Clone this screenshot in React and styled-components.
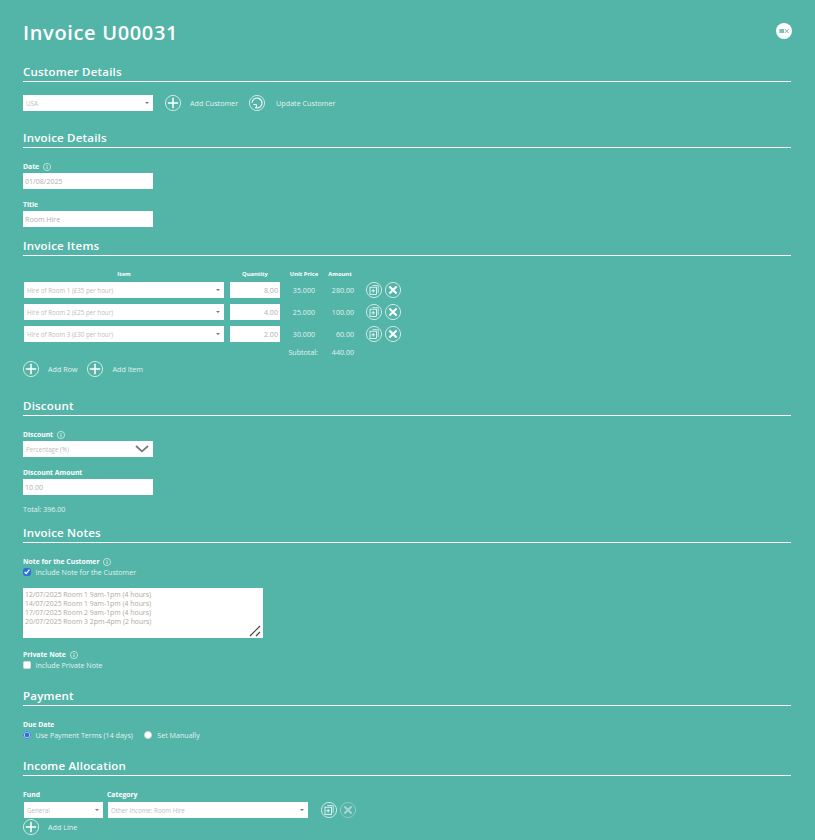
import React from 'react';
import styled, { createGlobalStyle } from 'styled-components';

const TEAL = '#53b4a8';

const GlobalStyle = createGlobalStyle`
  html, body {
    margin: 0;
    padding: 0;
    background: ${TEAL};
  }
  body {
    font-family: "Open Sans", "Noto Sans", sans-serif;
    color: #fff;
    overflow: hidden;
  }
`;

const Circle = ({ children, size = 16, faded }) => (
  <svg width={size} height={size} viewBox="0 0 16 16" fill="none" stroke={faded ? '#a9d6d0' : '#fff'} style={{ display: 'block', flex: 'none' }}>
    <circle cx="8" cy="8" r="7.6" strokeWidth="0.7" />
    {children}
  </svg>
);

const PlusIcon = () => (
  <Circle>
    <path d="M8 2.8v10.4M2.8 8h10.4" strokeWidth="1.5" />
  </Circle>
);

const RefreshIcon = () => (
  <Circle>
    <path d="M3 7.8A5 5 0 1 1 6 12.6" strokeWidth="1.1" />
    <path d="M4.4 9.6h3v3" strokeWidth="1" />
  </Circle>
);

const CopyIcon = () => (
  <Circle>
    <path d="M6.4 3.6h5.8v7.4" strokeWidth="0.7" />
    <rect x="4" y="5.2" width="6.4" height="7.2" strokeWidth="0.8" />
    <path d="M7.2 7v3.6M5.4 8.8H9" strokeWidth="0.8" />
  </Circle>
);

const CloseIcon = ({ faded }) => (
  <Circle faded={faded}>
    <path d="M4.4 4.4l7.2 7.2M11.6 4.4l-7.2 7.2" strokeWidth="2.1" />
  </Circle>
);

const InfoIcon = () => (
  <svg width="8" height="8" viewBox="0 0 8 8" fill="none" stroke="#fff" strokeWidth="0.6" style={{ display: 'block' }}>
    <circle cx="4" cy="4" r="3.6" />
    <path d="M4 3.4v2.6M4 2v0.8" strokeWidth="0.8" />
  </svg>
);

const BadgeIcon = () => (
  <svg width="16" height="16" viewBox="0 0 16 16" style={{ display: 'block' }}>
    <circle cx="8" cy="8" r="8" fill="#fff" />
    <rect x="3.4" y="6" width="4.6" height="4" fill="#7cc0b6" />
    <path d="M8.8 6l3.8 4M12.6 6l-3.8 4" stroke="#6fb9ae" strokeWidth="1" />
  </svg>
);

const Page = styled.div`
  width: 815px;
  height: 840px;
  box-sizing: border-box;
  padding: 0 24px 0 23px;
  background: ${TEAL};
  overflow: hidden;
`;

const TitleBar = styled.header`
  display: flex;
  align-items: flex-start;
  justify-content: space-between;
  height: 24px;
  padding-top: 21px;
`;

const BadgeSlot = styled.div`
  margin: 2px -1px 0 0;
`;

const Title = styled.h1`
  margin: 0;
  font-size: 20px;
  line-height: 24px;
  font-weight: 600;
  letter-spacing: 0.65px;
`;

const Section = styled.section`
  margin-top: ${(p) => p.$top}px;
`;

const Heading = styled.h2`
  margin: 0;
  height: 17px;
  font-size: 11.5px;
  line-height: 15px;
  font-weight: 600;
  letter-spacing: 0.2px;
  border-bottom: 1px solid #fff;
  box-sizing: content-box;
`;

const Row = styled.div`
  display: flex;
  align-items: center;
  margin-top: ${(p) => p.$top || 0}px;
  margin-left: ${(p) => p.$left || 0}px;
`;

const Field = styled.div`
  margin-top: ${(p) => p.$top || 0}px;
  width: ${(p) => p.$width || 130}px;
`;

const Label = styled.label`
  display: flex;
  align-items: center;
  gap: 4px;
  height: 8px;
  margin-bottom: 2px;
  font-size: 6.8px;
  line-height: 8px;
  font-weight: 700;
`;

const SelectBox = styled.div`
  display: flex;
  align-items: center;
  justify-content: space-between;
  box-sizing: border-box;
  width: ${(p) => p.$width || 130}px;
  height: 16px;
  padding: 0 4px 0 3px;
  background: #fff;
  font-size: 6.2px;
  color: #bdbdbd;
  flex: none;
`;

const Caret = styled.span`
  width: 0;
  height: 0;
  border-left: 2px solid transparent;
  border-right: 2px solid transparent;
  border-top: 2px solid #777;
`;

const TextBox = styled.input`
  display: block;
  box-sizing: border-box;
  width: ${(p) => p.$width || 130}px;
  height: 16px;
  padding: 0 2px;
  border: 0;
  outline: 0;
  background: #fff;
  font-family: inherit;
  font-size: 7.1px;
  color: #b0b0b0;
  text-align: ${(p) => p.$align || 'left'};
  flex: none;
`;

const LinkText = styled.span`
  font-size: 7.2px;
  color: #e3f3f0;
  margin-left: ${(p) => p.$left || 9}px;
  margin-right: ${(p) => p.$right || 0}px;
`;

const ItemsHead = styled.div`
  display: grid;
  grid-template-columns: 200px 62px 36px 36px;
  margin: 14px 0 4px 1px;
  height: 8px;
  font-size: 5.8px;
  line-height: 8px;
  font-weight: 700;
  text-align: center;
`;

const ItemRow = styled.div`
  display: grid;
  grid-template-columns: 200px 6px 50px 35px 39px 12px 16px 3px 16px;
  align-items: center;
  height: 16px;
  margin: 6px 0 0 1px;
  &:first-of-type {
    margin-top: 0;
  }
`;

const Cell = styled.span`
  font-size: 7.1px;
  color: #e3f3f0;
  text-align: ${(p) => p.$align || 'right'};
`;

const SubtotalRow = styled.div`
  display: grid;
  grid-template-columns: 249px 46px 36px;
  height: 8px;
  margin-top: 6px;
  line-height: 8px;
`;

const Chevron = () => (
  <svg width="14" height="8" viewBox="0 0 14 8" fill="none" stroke="#777" strokeWidth="1.7" style={{ display: 'block' }}>
    <path d="M1 1l6 5.4L13 1" />
  </svg>
);

const TotalText = styled.div`
  margin-top: 10px;
  font-size: 7.1px;
  line-height: 8px;
  color: #e3f3f0;
`;

const Check = styled.label`
  display: flex;
  align-items: center;
  gap: ${(p) => p.$gap || 4.5}px;
  height: 8px;
  margin-right: ${(p) => p.$right || 0}px;
  font-size: 7.1px;
  color: #e3f3f0;
  input {
    flex: none;
    width: 8px;
    height: 8px;
    margin: 0;
    accent-color: #2f6fd8;
  }
  input:not(:checked) {
    appearance: none;
    box-sizing: border-box;
    background: #fff;
    border: 0.5px solid #d8d8d8;
    border-radius: 1.5px;
  }
  input[type='radio']:not(:checked) {
    border-radius: 50%;
  }
`;

const NoteWrap = styled.div`
  position: relative;
  width: 240px;
  height: 50px;
  margin-top: 12px;
`;

const NoteArea = styled.textarea`
  display: block;
  box-sizing: border-box;
  width: 100%;
  height: 100%;
  padding: 2px;
  border: 0;
  outline: 0;
  resize: none;
  overflow: hidden;
  background: #fff;
  font-family: inherit;
  font-size: 6.9px;
  line-height: 9px;
  color: #b0a89c;
`;

const Handle = styled.svg`
  position: absolute;
  right: 2px;
  bottom: 1px;
`;

const AllocationHead = styled.div`
  display: grid;
  grid-template-columns: 84px 200px;
  margin: 15px 0 1px;
`;

const noteText = `12/07/2025 Room 1 9am-1pm (4 hours)
14/07/2025 Room 1 9am-1pm (4 hours)
17/07/2025 Room 2 9am-1pm (4 hours)
20/07/2025 Room 3 2pm-4pm (2 hours)`;

const items = [
  ['Hire of Room 1 (£35 per hour)', '8.00', '35.000', '280.00'],
  ['Hire of Room 2 (£25 per hour)', '4.00', '25.000', '100.00'],
  ['Hire of Room 3 (£30 per hour)', '2.00', '30.000', '60.00'],
];

export default function App() {
  return (
    <Page>
      <GlobalStyle />
      <TitleBar>
        <Title>Invoice U00031</Title>
        <BadgeSlot><BadgeIcon /></BadgeSlot>
      </TitleBar>

      <Section $top={19}>
        <Heading>Customer Details</Heading>
        <Row $top={13}>
          <SelectBox>USA<Caret /></SelectBox>
          <Row $left={12}><PlusIcon /></Row>
          <LinkText $right={11}>Add Customer</LinkText>
          <RefreshIcon />
          <LinkText $left={11}>Update Customer</LinkText>
        </Row>
      </Section>

      <Section $top={19}>
        <Heading>Invoice Details</Heading>
        <Field $top={15}>
          <Label>Date <InfoIcon /></Label>
          <TextBox defaultValue="01/08/2025" />
        </Field>
        <Field $top={12}>
          <Label>Title</Label>
          <TextBox defaultValue="Room Hire" />
        </Field>
      </Section>

      <Section $top={11}>
        <Heading>Invoice Items</Heading>
        <ItemsHead>
          <span>Item</span>
          <span>Quantity</span>
          <span>Unit Price</span>
          <span>Amount</span>
        </ItemsHead>
        <div>
          {items.map(([name, qty, price, amount]) => (
            <ItemRow key={name}>
              <SelectBox $width={200}>{name}<Caret /></SelectBox>
              <span />
              <TextBox $width={50} $align="right" defaultValue={qty} />
              <Cell>{price}</Cell>
              <Cell>{amount}</Cell>
              <span />
              <CopyIcon />
              <span />
              <CloseIcon />
            </ItemRow>
          ))}
        </div>
        <SubtotalRow>
          <span />
          <Cell>Subtotal:</Cell>
          <Cell>440.00</Cell>
        </SubtotalRow>
        <Row $top={5}>
          <PlusIcon />
          <LinkText $right={9}>Add Row</LinkText>
          <PlusIcon />
          <LinkText $left={10}>Add Item</LinkText>
        </Row>
      </Section>

      <Section $top={21}>
        <Heading>Discount</Heading>
        <Field $top={15}>
          <Label>Discount <InfoIcon /></Label>
          <SelectBox>Percentage (%)<Chevron /></SelectBox>
        </Field>
        <Field $top={12}>
          <Label>Discount Amount</Label>
          <TextBox defaultValue="10.00" />
        </Field>
        <TotalText>Total: 396.00</TotalText>
      </Section>

      <Section $top={12}>
        <Heading>Invoice Notes</Heading>
        <Field $top={15} $width={240}>
          <Label>Note for the Customer <InfoIcon /></Label>
          <Check><input type="checkbox" defaultChecked />Include Note for the Customer</Check>
        </Field>
        <NoteWrap>
          <NoteArea defaultValue={noteText} />
          <Handle width="12" height="12" viewBox="0 0 12 12" fill="none" stroke="#444" strokeWidth="1.2">
            <path d="M1 11L11 1M7 11l4-4" />
          </Handle>
        </NoteWrap>
        <Field $top={13} $width={240}>
          <Label>Private Note <InfoIcon /></Label>
          <Check><input type="checkbox" />Include Private Note</Check>
        </Field>
      </Section>

      <Section $top={19}>
        <Heading>Payment</Heading>
        <Field $top={15} $width={300}>
          <Label>Due Date</Label>
          <Row>
            <Check $right={11}><input type="radio" name="due" defaultChecked />Use Payment Terms (14 days)</Check>
            <Check $gap={5.5}><input type="radio" name="due" />Set Manually</Check>
          </Row>
        </Field>
      </Section>

      <Section $top={19}>
        <Heading>Income Allocation</Heading>
        <AllocationHead>
          <Label as="span">Fund</Label>
          <Label as="span">Category</Label>
        </AllocationHead>
        <Row $left={1}>
          <SelectBox $width={79}>General<Caret /></SelectBox>
          <Row $left={5}><SelectBox $width={200}>Other Income: Room Hire<Caret /></SelectBox></Row>
          <Row $left={13}><CopyIcon /></Row>
          <Row $left={3}><CloseIcon faded /></Row>
        </Row>
        <Row $top={1}>
          <PlusIcon />
          <LinkText>Add Line</LinkText>
        </Row>
      </Section>
    </Page>
  );
}
